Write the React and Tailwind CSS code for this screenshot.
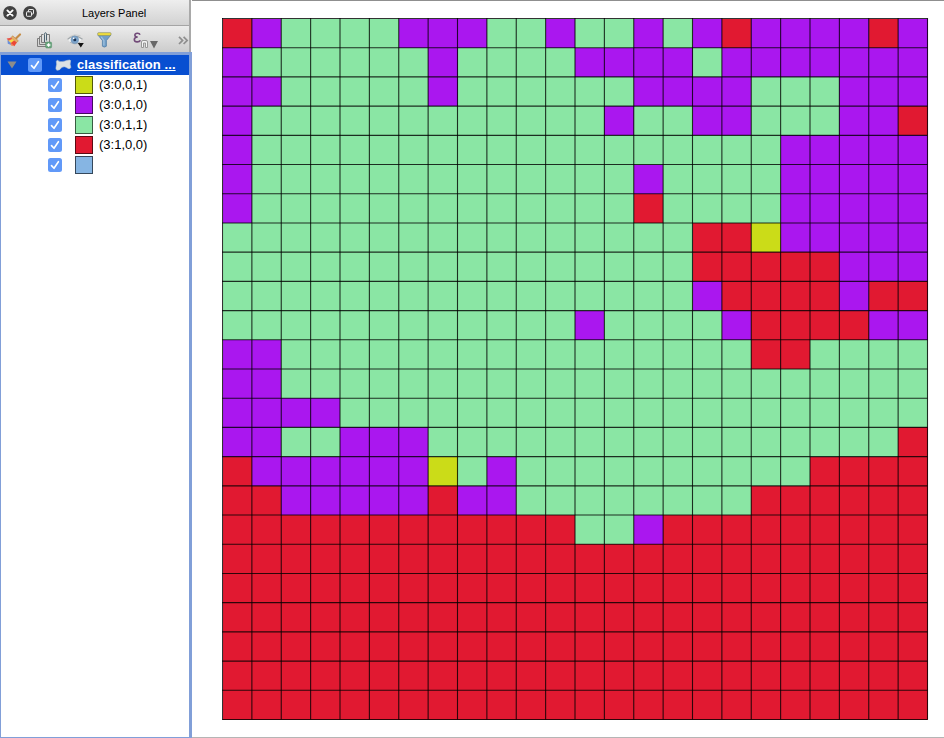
const COLORS = { R: '#e11931', P: '#aa17ef', G: '#8ae6a4', Y: '#cbdc18' };

// One entry per grid row: run-length encoded class letters
const ROWS = [
  'R1 P1 G4 P3 G2 P1 G2 P1 G1 P1 R1 P4 R1 P1',
  'P1 G6 P1 G4 P4 G1 P7',
  'P2 G5 P1 G6 P4 G3 P3',
  'P1 G12 P1 G2 P2 G3 P2 R1',
  'P1 G18 P5',
  'P1 G13 P1 G4 P5',
  'P1 G13 R1 G4 P5',
  'G16 R2 Y1 P5',
  'G16 R5 P3',
  'G16 P1 R4 P1 R2',
  'G12 P1 G4 P1 R4 P2',
  'P2 G16 R2 G4',
  'P2 G22',
  'P4 G20',
  'P2 G2 P3 G16 R1',
  'R1 P6 Y1 G1 P1 G10 R4',
  'R2 P5 R1 P2 G8 R6',
  'R12 G2 P1 R9',
  'R24', 'R24', 'R24', 'R24', 'R24', 'R24',
].map((row) => row.split(' ').flatMap((run) => Array(Number(run.slice(1))).fill(run[0])));

const CW = 705 / 24;
const CH = 701 / 24;

function GridMap() {
  return (
    <svg width="708" height="704" viewBox="0 0 708 704" className="block">
      {ROWS.map((row, r) =>
        row.map((c, i) => (
          <rect key={`${r}-${i}`} x={0.5 + i * CW} y={0.5 + r * CH} width={CW} height={CH}
            fill={COLORS[c]} shapeRendering="crispEdges" />
        ))
      )}
      {Array.from({ length: 25 }, (_, i) => (
        <g key={i} stroke="#000" strokeOpacity="0.8" strokeWidth="1.1">
          <line x1={0.5 + i * CW} x2={0.5 + i * CW} y1="0" y2="701.5" />
          <line x1="0" x2="705.5" y1={0.5 + i * CH} y2={0.5 + i * CH} />
        </g>
      ))}
    </svg>
  );
}

function Check() {
  return (
    <svg width="14" height="14" viewBox="0 0 14 14" className="shrink-0">
      <rect width="14" height="14" rx="2.5" fill="#6199f8" />
      <path d="M3.5 7.6 L6 10.3 L10.4 3.7" fill="none" stroke="#fff" strokeWidth="1.6" strokeLinecap="round" strokeLinejoin="round" />
    </svg>
  );
}

function CloseIcon() {
  return (
    <svg width="14" height="14" viewBox="0 0 14 14">
      <circle cx="7" cy="7" r="6.9" fill="#424242" />
      <path d="M4.4 4.4 L9.6 9.6 M9.6 4.4 L4.4 9.6" stroke="#fff" strokeWidth="1.9" strokeLinecap="round" />
    </svg>
  );
}

function FloatIcon() {
  return (
    <svg width="14" height="14" viewBox="0 0 14 14">
      <circle cx="7" cy="7" r="6.9" fill="#424242" />
      <rect x="5.5" y="3.5" width="5" height="4.5" rx=".6" fill="none" stroke="#eee" strokeWidth="1" />
      <rect x="3.5" y="5.8" width="5" height="4.5" rx=".6" fill="#424242" stroke="#eee" strokeWidth="1" />
    </svg>
  );
}

function BrushIcon() {
  return (
    <svg width="16" height="14" viewBox="0 0 16 14">
      <path d="M10.2 5.2 L14 1.4" stroke="#c58b45" strokeWidth="2.1" strokeLinecap="round" />
      <path d="M6.6 2.8 L12.4 7.8 L10.4 9.8 L4.8 5Z" fill="#e2ae6c" stroke="#b87f42" strokeWidth=".6" />
      <path d="M5 4.8 L.6 5.4 L2.8 8.2 L6.8 6.4Z" fill="#e8564a" />
      <path d="M6.2 5.9 L2.4 7.8 L5.2 10.6 L8.4 7.8Z" fill="#f7d94a" />
      <path d="M1.4 7 L1.8 10.8 L5.4 12 L4.8 9.8Z" fill="#6b8fd8" />
      <path d="M8 7.4 L4.6 10.3 L8.4 13.2 L10.8 9.6Z" fill="#ec4836" />
      <path d="M4.4 9.8 L5 12.4 L8 13.2Z" fill="#ef8a56" />
    </svg>
  );
}

function AddGroupIcon() {
  return (
    <svg width="16" height="17" viewBox="0 0 16 17">
      <g fill="none" stroke="#7c7c7c" strokeWidth="1">
        <path d="M3 6.5 H.5 V14.5 H9" />
        <path d="M5 4.5 H2.5 V12.5 H9" />
        <path d="M6.5 2.5 H4.5 V10.5 H9 M9 2.5 H12.5 V10" />
        <path d="M7.5 10 V2.5 Q7.5 .7 8.5 .7 Q9.5 .7 9.5 2.5 V8.5" stroke="#4f6673" />
      </g>
      <rect x="8.6" y="10" width="6" height="6" rx="1.2" fill="#68a57c" stroke="#4d8b63" strokeWidth=".5" />
      <path d="M11.6 11.2 V14.8 M9.8 13 H13.4" stroke="#fff" strokeWidth="1.3" />
    </svg>
  );
}

function EyeIcon() {
  return (
    <svg width="19" height="15" viewBox="0 0 19 15">
      <path d="M.8 5.5 Q7 -1 15.3 5 Q9.5 11.6 3.5 8.7Z" fill="#eff1f2" />
      <path d="M.6 5.4 Q7 -1.2 15.5 5.2" fill="none" stroke="#a0a6a9" strokeWidth="1.2" />
      <path d="M2.6 2.8 Q7.5 -.6 13.5 1.7" fill="none" stroke="#c5c8c9" strokeWidth=".9" />
      <path d="M3 8.1 Q8 11.5 13 8.3" fill="none" stroke="#a6adb2" strokeWidth=".9" />
      <circle cx="7.8" cy="5.8" r="3.8" fill="#7da4ca" stroke="#6289b0" strokeWidth=".5" />
      <circle cx="7.8" cy="5.8" r="1.5" fill="#1c3354" />
      <circle cx="6.7" cy="4.4" r=".8" fill="#fff" />
      <path d="M10.8 9 H16.8 L13.8 13.6Z" fill="#111" />
    </svg>
  );
}

function FilterIcon() {
  return (
    <svg width="15" height="16" viewBox="0 0 15 16">
      <path d="M.9 3 H13.9 L9.4 8.5 V14.2 Q7.3 16 5.4 14.2 V8.5Z" fill="#719fc9" stroke="#5580a8" strokeWidth=".8" />
      <path d="M4.2 4.8 L6.9 8.5 V13.5" stroke="#a4c4df" strokeWidth="1.2" fill="none" />
      <rect x=".7" y=".7" width="13.3" height="2.7" rx=".8" fill="#f5e23c" stroke="#8d9269" strokeWidth=".7" />
    </svg>
  );
}

function ExpressionIcon() {
  return (
    <svg width="26" height="18" viewBox="0 0 26 18">
      <path d="M8 3.8 Q7.5 2.2 5.3 2.3 Q2.7 2.5 2.9 4.4 Q3.1 6 5.7 6 Q2.3 6.1 2.3 8.7 Q2.5 11 5.2 10.9 Q7.5 10.8 8.4 9.3" fill="none" stroke="#714a78" strokeWidth="1.6" />
      <path d="M9.5 16.5 V11 Q9.5 9.5 11 9.5 H14 Q15.5 9.5 15.5 11 V16.5 H13.5 V12 H11.5 V16.5Z" fill="#f4f4f4" stroke="#979797" strokeWidth="1" />
      <path d="M18 10 H26 L22 17.4Z" fill="#686868" />
    </svg>
  );
}

function MoreIcon() {
  return (
    <svg width="11" height="9" viewBox="0 0 11 9">
      <path d="M1 .8 L4.6 4.4 L1 8 M5.6 .8 L9.2 4.4 L5.6 8" fill="none" stroke="#8e8e8e" strokeWidth="1.7" />
    </svg>
  );
}

function PolygonIcon() {
  return (
    <svg width="17" height="13" viewBox="0 0 17 13">
      <path d="M2.2 1.2 Q5.2 3.6 9.4 2.2 Q13 1 15 1 Q16.2 1.4 15.4 3 Q14.5 5.4 15.9 8.2 Q15.4 10.2 13.2 9.5 Q9.6 6.6 7 8.2 Q4.8 11.5 2 11.3 Q.4 10.8 1 8.3 Q2.2 5.3 1.3 2.6Z" fill="#dbe1e4" stroke="#b8c6d1" strokeWidth=".6" />
    </svg>
  );
}

const LEGEND = [
  ['#cbdc18', '(3:0,0,1)'],
  ['#aa17ef', '(3:0,1,0)'],
  ['#8ae6a4', '(3:0,1,1)'],
  ['#e11931', '(3:1,0,0)'],
  ['#86b5e3', ''],
];

function LayersPanel() {
  return (
    <aside className="flex h-full w-[192px] shrink-0 flex-col">
      <div className="w-[191px] border-r-2 border-[#a9a9a9]">
        <header className="flex h-[26px] items-center border-b border-[#a5a5a5] bg-gradient-to-b from-[#eeeeee] to-[#d2d2d2] pl-[3px]">
          <CloseIcon />
          <span className="ml-[6px]"><FloatIcon /></span>
          <span className="ml-[45px] whitespace-nowrap text-[11px] leading-[14px]">Layers Panel</span>
        </header>
        <div className="flex h-[26px] items-start bg-gradient-to-b from-[#ececec] to-[#cccccc]">
          <span className="ml-[6px] mt-[7px]"><BrushIcon /></span>
          <span className="ml-[15px] mt-[6px]"><AddGroupIcon /></span>
          <span className="ml-[14px] mt-[8px]"><EyeIcon /></span>
          <span className="ml-[11px] mt-[6px]"><FilterIcon /></span>
          <span className="ml-[20px] mt-[5px]"><ExpressionIcon /></span>
          <span className="ml-[20px] mt-[10px]"><MoreIcon /></span>
        </div>
      </div>
      <div className="flex min-h-0 flex-1 flex-col border-b border-l border-r-[3px] border-t-[3px] border-[#819fd8] bg-white">
        <div className="flex h-5 shrink-0 items-center bg-[#084fd1] pl-[6px] text-white">
          <svg width="10" height="8" viewBox="0 0 10 8"><path d="M.5 .5 H9.5 L5 7.5Z" fill="#8c8c8c" /></svg>
          <span className="ml-[11px]"><Check /></span>
          <span className="ml-[13px]"><PolygonIcon /></span>
          <span className="ml-[5px] whitespace-nowrap text-[13px] font-bold leading-5 tracking-[0.1px] underline">classification ...</span>
        </div>
        {LEGEND.map(([color, label]) => (
          <div key={color} className="flex h-5 shrink-0 items-center pl-[47px]">
            <Check />
            <span className="ml-[13px] h-[18px] w-[18px] border border-black/60" style={{ backgroundColor: color }} />
            <span className="ml-[6px] text-[13px] leading-5">{label}</span>
          </div>
        ))}
      </div>
    </aside>
  );
}

export default function App() {
  return (
    <div className="flex h-[738px] w-[944px] overflow-hidden bg-white font-['Liberation_Sans',Arial,sans-serif] text-black">
      <LayersPanel />
      <main className="flex-1 border-b border-t border-b-[#b5b5b5] border-t-[#8f8f8f] bg-white pl-[30px] pt-[17px]">
        <GridMap />
      </main>
    </div>
  );
}
